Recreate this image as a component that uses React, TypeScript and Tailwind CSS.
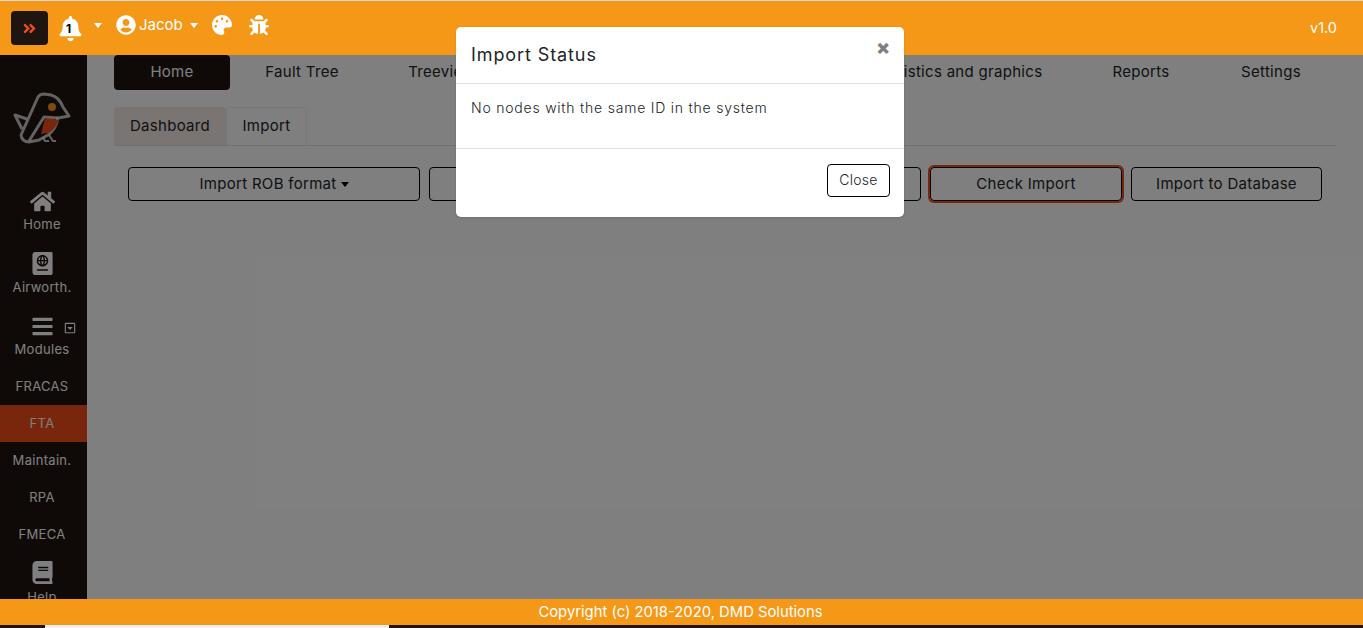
import { useState } from 'react';
import { FaAngleDoubleRight, FaBell, FaUserCircle, FaPalette, FaBug, FaHome, FaPassport, FaBars, FaBook, FaRegCaretSquareDown } from 'react-icons/fa';

function BirdLogo() {
  return (
    <svg width="75" height="65" viewBox="0 0 75 65" fill="none">
      {/* outline of the bird */}
      <path
        d="M16 50 L33 12 Q35 9 39 9 L46 10 Q54 12 58 22 L64 31 L53 33 Q51 44 43 50 L34 55 L24 57 Q17 57 16 50 Z"
        stroke="#fff"
        strokeOpacity="0.75"
        strokeWidth="3"
        strokeLinejoin="round"
      />
      <path d="M24 56 L39 32 L53 33" stroke="#fff" strokeOpacity="0.75" strokeWidth="3" strokeLinejoin="round" />
      {/* tail */}
      <path d="M17 44 L10 30 L22 34" stroke="#fff" strokeOpacity="0.75" strokeWidth="3" strokeLinejoin="round" />
      <circle cx="47" cy="22" r="4" fill="#f79818" />
      {/* wing */}
      <path d="M40 33 L54 35 Q50 45 43 48 L36 49 Z" fill="#f04e18" />
      {/* legs */}
      <path d="M38 52 L40 56 L44 56 M44 50 L48 56 L51 56" stroke="#fff" strokeOpacity="0.75" strokeWidth="2" />
    </svg>
  );
}

function Caret({ dark, className }: { dark?: boolean; className?: string }) {
  return (
    <span
      className={`h-0 w-0 border-x-[4.5px] border-t-[5px] border-x-transparent ${dark ? 'border-t-black' : 'border-t-white'} ${className ?? ''}`}
    />
  );
}

function SideLink({ label, active }: { label: string; active?: boolean }) {
  return (
    <div className={`flex h-[37px] items-center justify-center pr-[3px] text-[13px] tracking-[0.3px] text-white ${active ? 'bg-[#f04e18]' : ''}`}>
      {label}
    </div>
  );
}

function SideIcon({ icon, label, className }: { icon: React.ReactNode; label: string; className: string }) {
  return (
    <div className={`flex flex-col items-center pr-[3px] text-[13px] leading-[20px] tracking-[0.3px] ${className}`}>
      {icon}
      <span>{label}</span>
    </div>
  );
}

function OutlineButton({ children, className }: { children?: React.ReactNode; className?: string }) {
  return (
    <button className={`flex h-[34px] items-center justify-center rounded border border-black text-[15px] tracking-[0.3px] text-[#212529] ${className ?? ''}`}>
      {children}
    </button>
  );
}

export default function App() {
  const [open] = useState(true);

  return (
    <div className="relative h-[628px] w-[1363px] overflow-hidden bg-[#1e1410] font-['Inter','Noto_Sans',sans-serif]">
      {/* top strip above the header */}
      <div className="relative z-20 h-px bg-[#d8d8d8]" />

      {/* Header */}
      <header className="relative z-20 flex h-[54px] items-center bg-[#f59817] pl-[11px] pr-[26px] text-white">
        <div className="flex h-[34px] w-[37px] items-center justify-center rounded bg-[#1e1410] text-[#f04e18]">
          <FaAngleDoubleRight size={15} />
        </div>
        <div className="relative ml-[10px] flex items-center">
          <FaBell size={25} />
          <span className="absolute left-[8px] top-[5px] text-[12px] font-bold leading-[16px] text-black">1</span>
        </div>
        <div className="flex items-center pb-[6px]">
          <Caret className="ml-[11px]" />
          <FaUserCircle size={20} className="ml-[14px]" />
          <span className="ml-[3px] text-[15px]">Jacob</span>
          <Caret className="ml-[7px]" />
          <FaPalette size={20} className="ml-[14px]" />
          <FaBug size={20} className="ml-[17px]" />
        </div>
        <span className="ml-auto text-[14.5px]">v1.0</span>
      </header>

      {/* Body */}
      <div className="flex h-[544px]">
        <aside className="w-[87px] shrink-0 overflow-hidden bg-[#1e1410] text-white">
          <div className="pl-[5px] pt-[30px]">
            <BirdLogo />
          </div>
          <SideIcon icon={<FaHome size={25} />} label="Home" className="pt-[39px]" />
          <SideIcon icon={<FaPassport size={23} />} label="Airworth." className="gap-[2px] pt-[18px]" />
          <div className="relative">
            <SideIcon icon={<FaBars size={23} />} label="Modules" className="gap-px pt-[18px]" />
            <FaRegCaretSquareDown size={12} className="absolute left-[64px] top-[25px]" />
          </div>
          <div className="mt-[9px]">
            <SideLink label="FRACAS" />
            <SideLink label="FTA" active />
            <SideLink label="Maintain." />
            <SideLink label="RPA" />
            <SideLink label="FMECA" />
          </div>
          <SideIcon icon={<FaBook size={23} />} label="Help" className="gap-[3px] pt-[8px]" />
        </aside>

        <main className="flex-1 bg-white pl-[27px] pr-[27px]">
          {/* Primary tabs */}
          <nav className="flex h-[35px] items-center text-[15px] tracking-[0.3px] text-[#212529]">
            <div className="flex h-[35px] w-[116px] items-center justify-center rounded bg-[#1e1410] text-white">Home</div>
            <span className="w-[144px] text-center">Fault Tree</span>
            <span className="w-[135px] text-center">Treeview</span>
            <span className="w-[332px]" />
            <span className="w-[235px] text-center">Statistics and graphics</span>
            <span className="w-[130px] text-center">Reports</span>
            <span className="w-[130px] text-center">Settings</span>
          </nav>

          {/* Secondary tabs */}
          <div className="mt-[17px] flex h-[39px] border-b border-[#dee2e6] text-[15px] tracking-[0.3px] text-[#212529]">
            <div className="flex w-[112px] items-center justify-center rounded-t bg-[#f5e9e6]">Dashboard</div>
            <div className="flex w-[81px] items-center justify-center rounded-t border border-b-0 border-[#eceff2]">Import</div>
          </div>

          {/* Toolbar */}
          <div className="mt-[21px] flex gap-[9px] pl-[14px]">
            <OutlineButton className="w-[292px] gap-1">
              Import ROB format <Caret dark />
            </OutlineButton>
            <OutlineButton className="w-[492px]" />
            <OutlineButton className="w-[192px] shadow-[0_0_0_2px_#f04e18]">Check Import</OutlineButton>
            <OutlineButton className="w-[191px]">Import to Database</OutlineButton>
          </div>
        </main>
      </div>

      {/* Footer */}
      <footer className="relative z-20 flex h-[26px] items-center justify-center bg-[#f59817] pr-[2px] text-[14.8px] text-white">
        Copyright (c) 2018-2020, DMD Solutions
      </footer>
      <div className="relative z-20 flex h-[3px]">
        <div className="w-[45px] bg-[#1e1410]" />
        <div className="w-[344px] bg-[#f0f0f0]" />
        <div className="flex-1 bg-[#1e1410]" />
      </div>

      {/* Backdrop */}
      {open && <div className="absolute inset-0 z-10 bg-black/50" />}

      {/* Modal */}
      {open && (
        <div className="absolute left-[456px] top-[27px] z-30 w-[448px] rounded-[5px] bg-white shadow-sm">
          <div className="relative flex h-[57px] items-center border-b border-[#dee2e6] px-[15px] pb-px">
            <h5 className="text-[18px] tracking-[0.9px] text-[#212529]">Import Status</h5>
            <span className="absolute right-[14px] top-[8px] text-[20px] font-black leading-[24px] text-[#7f7f7f]">×</span>
          </div>
          <div className="h-[65px] border-b border-[#dee2e6] px-[15px] pt-[14px] text-[14px] font-light leading-[20px] tracking-[0.78px] text-[#212529]">
            No nodes with the same ID in the system
          </div>
          <div className="flex h-[68px] items-start justify-end pr-[14px] pt-[15px]">
            <button className="h-[33px] w-[63px] rounded border border-black pb-[3px] text-[14px] font-light tracking-[0.3px] text-[#212529]">Close</button>
          </div>
        </div>
      )}
    </div>
  );
}
